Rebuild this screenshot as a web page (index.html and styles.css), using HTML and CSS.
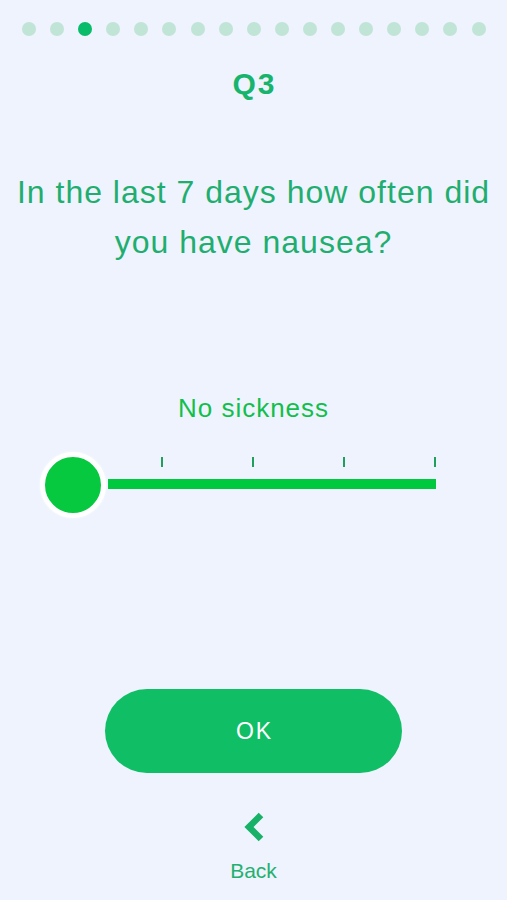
FILE: index.html
```html
<!DOCTYPE html>
<html lang="en">
<head>
  <meta charset="UTF-8">
  <meta name="viewport" content="width=device-width, initial-scale=1.0">
  <title>Q3</title>
  <link rel="stylesheet" href="styles.css">
</head>
<body>
  <div class="screen">
    <!-- progress dots, 3rd is current -->
    <div class="dots">
      <span class="dot"></span>
      <span class="dot"></span>
      <span class="dot active"></span>
      <span class="dot"></span>
      <span class="dot"></span>
      <span class="dot"></span>
      <span class="dot"></span>
      <span class="dot"></span>
      <span class="dot"></span>
      <span class="dot"></span>
      <span class="dot"></span>
      <span class="dot"></span>
      <span class="dot"></span>
      <span class="dot"></span>
      <span class="dot"></span>
      <span class="dot"></span>
      <span class="dot"></span>
    </div>

    <h1 class="qnum">Q3</h1>
    <p class="question">In the last 7 days how often did<br>you have nausea?</p>

    <p class="value">No sickness</p>
    <div class="slider">
      <div class="track"></div>
      <span class="tick t1"></span>
      <span class="tick t2"></span>
      <span class="tick t3"></span>
      <span class="tick t4"></span>
      <div class="thumb"></div>
    </div>

    <button class="ok">OK</button>

    <a class="back" href="#">
      <svg width="22" height="30" viewBox="0 0 22 30">
        <path d="M18 3 L6 15 L18 27" fill="none" stroke="#17b268" stroke-width="6.5"/>
      </svg>
      <span>Back</span>
    </a>
  </div>
</body>
</html>
```

FILE: styles.css
```css
body {
    margin: 0;
    background-color: #eef3fd;
    font-family: "Liberation Sans", Arial, sans-serif;
}
.screen {
    width: 507px;
    height: 900px;
    display: flex;
    flex-direction: column;
    align-items: center;
}
.dots {
    align-self: flex-start;
    display: flex;
    gap: 14.1px;
    padding: 22px 0 0 22px;
}
.dot {
    width: 14px;
    height: 14px;
    border-radius: 50%;
    background-color: #c0e4d5;
}
.dot.active {
    background-color: #09bc6a;
}
.qnum {
    margin: 32px 0 0;
    font-size: 30px;
    line-height: 32px;
    font-weight: bold;
    letter-spacing: 2px;
    text-indent: 2px;
    color: #16b46c;
}
.question {
    margin: 67px 0 0;
    font-size: 32px;
    line-height: 50px;
    letter-spacing: 1px;
    text-align: center;
    color: #1fae6f;
}
.value {
    margin: 126px 0 0;
    font-size: 26px;
    line-height: 30px;
    letter-spacing: 1px;
    color: #12bf4c;
}
.slider {
    position: relative;
    align-self: flex-start;
    margin: 29px 0 0 40px;
    width: 400px;
    height: 66px;
}
.track {
    position: absolute;
    left: 68px;
    top: 27px;
    width: 328px;
    height: 10px;
    background-color: #00c83f;
}
.tick {
    position: absolute;
    top: 5px;
    width: 2px;
    height: 10px;
    background-color: #1f9e5e;
}
.t1 { left: 121px; }
.t2 { left: 212px; }
.t3 { left: 303px; }
.t4 { left: 394px; }
.thumb {
    position: absolute;
    left: 0;
    top: 0;
    width: 56px;
    height: 56px;
    border: 5px solid #ffffff;
    border-radius: 50%;
    background-color: #06c93f;
    box-shadow: 0 0 3px rgba(255, 255, 255, 0.8);
}
.ok {
    margin-top: 171px;
    width: 297px;
    height: 84px;
    border: none;
    border-radius: 42px;
    background-color: #10be66;
    color: #ffffff;
    font-family: inherit;
    font-size: 23px;
    letter-spacing: 2px;
    text-indent: 2px;
    cursor: pointer;
}
.back {
    margin-top: 39px;
    display: flex;
    flex-direction: column;
    align-items: center;
    gap: 17px;
    text-decoration: none;
    color: #23b06f;
    font-size: 21px;
    line-height: 24px;
}
.back svg {
    display: block;
}
```
